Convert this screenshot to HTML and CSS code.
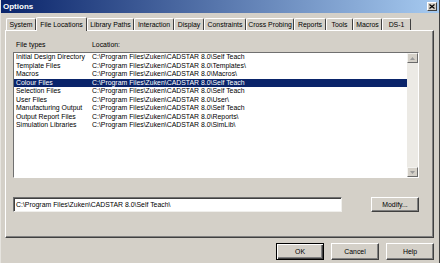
FILE: index.html
```html
<!DOCTYPE html>
<html>
<head>
<meta charset="utf-8">
<link rel="stylesheet" href="styles.css">
</head>
<body>
<div class="window">
  <div class="titlebar">
    <span class="title">Options</span>
    <span class="close"><svg width="6" height="5" viewBox="0 0 6 5"><path d="M0.5 0.5L5.5 4.5M5.5 0.5L0.5 4.5" stroke="#000" stroke-width="1.2"/></svg></span>
  </div>
  <div class="content">
    <div class="tabs">
      <div class="tab">System</div>
      <div class="tab active">File Locations</div>
      <div class="tab">Library Paths</div>
      <div class="tab">Interaction</div>
      <div class="tab">Display</div>
      <div class="tab">Constraints</div>
      <div class="tab">Cross Probing</div>
      <div class="tab">Reports</div>
      <div class="tab">Tools</div>
      <div class="tab">Macros</div>
      <div class="tab">DS-1</div>
    </div>
    <div class="panel">
      <div class="header">
        <span class="col1">File types</span>
        <span class="col2">Location:</span>
      </div>
      <div class="list">
        <div class="rows">
          <div class="row"><span class="col1">Initial Design Directory</span><span class="col2">C:\Program Files\Zuken\CADSTAR 8.0\Self Teach</span></div>
          <div class="row"><span class="col1">Template Files</span><span class="col2">C:\Program Files\Zuken\CADSTAR 8.0\Templates\</span></div>
          <div class="row"><span class="col1">Macros</span><span class="col2">C:\Program Files\Zuken\CADSTAR 8.0\Macros\</span></div>
          <div class="row selected"><span class="col1">Colour Files</span><span class="col2">C:\Program Files\Zuken\CADSTAR 8.0\Self Teach</span></div>
          <div class="row"><span class="col1">Selection Files</span><span class="col2">C:\Program Files\Zuken\CADSTAR 8.0\Self Teach</span></div>
          <div class="row"><span class="col1">User Files</span><span class="col2">C:\Program Files\Zuken\CADSTAR 8.0\User\</span></div>
          <div class="row"><span class="col1">Manufacturing Output</span><span class="col2">C:\Program Files\Zuken\CADSTAR 8.0\Self Teach</span></div>
          <div class="row"><span class="col1">Output Report Files</span><span class="col2">C:\Program Files\Zuken\CADSTAR 8.0\Reports\</span></div>
          <div class="row"><span class="col1">Simulation Libraries</span><span class="col2">C:\Program Files\Zuken\CADSTAR 8.0\SimLib\</span></div>
        </div>
        <div class="scrollbar">
          <div class="sbtn"><svg width="5" height="3" viewBox="0 0 5 3"><path d="M0 3L2.5 0L5 3Z" fill="#9a9a9a"/></svg></div>
          <div class="track"></div>
          <div class="sbtn"><svg width="5" height="3" viewBox="0 0 5 3"><path d="M0 0L2.5 3L5 0Z" fill="#9a9a9a"/></svg></div>
        </div>
      </div>
      <div class="pathrow">
        <div class="field">C:\Program Files\Zuken\CADSTAR 8.0\Self Teach\</div>
        <div class="btn modify">Modify...</div>
      </div>
    </div>
    <div class="buttons">
      <div class="btn default">OK</div>
      <div class="btn">Cancel</div>
      <div class="btn">Help</div>
    </div>
  </div>
</div>
</body>
</html>
```

FILE: styles.css
```css
html, body {
  margin: 0;
  padding: 0;
  background: #D4D0C8;
}
.window {
  width: 440px;
  height: 263px;
  background: #D4D0C8;
  font-family: "Liberation Sans", Arial, sans-serif;
  font-size: 6.9px;
  color: #000;
  box-sizing: border-box;
  border-right: 1px solid #404040;
  border-left: 1px solid #e6e4df;
  overflow: hidden;
}
.titlebar {
  height: 13px;
  display: flex;
  align-items: center;
  justify-content: space-between;
  background: linear-gradient(to right, #0A246A, #A6CAF0);
  padding: 0 2px 0 2px;
}
.title {
  color: #fff;
  font-weight: bold;
  font-size: 8px;
}
.close {
  width: 10px;
  height: 9px;
  box-sizing: border-box;
  background: #D4D0C8;
  border: 1px solid;
  border-color: #fff #404040 #404040 #fff;
  display: flex;
  align-items: center;
  justify-content: center;
}
.close svg { display: block; }
.content {
  padding: 0 5px 0 4px;
}
.tabs {
  display: flex;
  align-items: flex-end;
  height: 17px;
  padding-left: 1px;
}
.tab {
  height: 12px;
  box-sizing: border-box;
  border-top: 1px solid #fff;
  border-left: 1px solid #fff;
  border-right: 1px solid #404040;
  border-radius: 2px 2px 0 0;
  display: flex;
  align-items: center;
  justify-content: center;
  white-space: nowrap;
}
.tab.active {
  height: 14px;
  margin-bottom: -1px;
  position: relative;
  z-index: 1;
  background: #D4D0C8;
  padding-bottom: 1px;
}
.tab:nth-child(1) { width: 30px; }
.tab:nth-child(2) { width: 51px; }
.tab:nth-child(3) { width: 47px; }
.tab:nth-child(4) { width: 40px; }
.tab:nth-child(5) { width: 30px; }
.tab:nth-child(6) { width: 42px; }
.tab:nth-child(7) { width: 48px; }
.tab:nth-child(8) { width: 32px; }
.tab:nth-child(9) { width: 27px; }
.tab:nth-child(10) { width: 29px; }
.tab:nth-child(11) { width: 29px; }
.panel {
  height: 208px;
  box-sizing: border-box;
  border: 1px solid;
  border-color: #fff #404040 #404040 #fff;
  box-shadow: inset -1px -1px #808080;
  padding: 9px 14px 0 7px;
}
.header {
  display: flex;
  height: 9px;
  line-height: 9px;
  padding-left: 3px;
  margin-bottom: 3px;
}
.col1 {
  width: 76px;
  flex: none;
  white-space: nowrap;
}
.col2 {
  white-space: nowrap;
}
.list {
  height: 126px;
  box-sizing: border-box;
  background: #fff;
  border: 1px solid;
  border-color: #707070 #fff #fff #707070;
  display: flex;
}
.rows {
  flex: 1;
  overflow: hidden;
}
.row {
  display: flex;
  height: 8.5px;
  line-height: 8.5px;
  padding-left: 2px;
}
.row.selected {
  background: #0A246A;
  color: #fff;
}
.scrollbar {
  width: 11px;
  display: flex;
  flex-direction: column;
  background: #ECEAE5;
}
.sbtn {
  height: 10px;
  box-sizing: border-box;
  background: #D4D0C8;
  border: 1px solid;
  border-color: #f4f3f0 #6a6a6a #6a6a6a #f4f3f0;
  display: flex;
  align-items: center;
  justify-content: center;
}
.sbtn svg { display: block; }
.track {
  flex: 1;
}
.pathrow {
  display: flex;
  justify-content: space-between;
  margin-top: 19px;
  height: 15px;
}
.field {
  width: 329px;
  box-sizing: border-box;
  background: #fff;
  border: 1px solid;
  border-color: #707070 #f0efec #f0efec #707070;
  box-shadow: inset 1px 1px #404040;
  padding-left: 2px;
  line-height: 13px;
  white-space: nowrap;
}
.btn {
  box-sizing: border-box;
  background: #D4D0C8;
  border: 1px solid;
  border-color: #fff #404040 #404040 #fff;
  box-shadow: inset -1px -1px #808080;
  display: flex;
  align-items: center;
  justify-content: center;
}
.modify {
  width: 48px;
  height: 15px;
}
.buttons {
  display: flex;
  justify-content: flex-end;
  gap: 7px;
  margin-top: 5px;
}
.buttons .btn {
  width: 48px;
  height: 17px;
}
.buttons .btn.default {
  border-color: #000;
  box-shadow: inset 1px 1px #fff, inset -1px -1px #404040, inset -2px -2px #808080;
}
```
